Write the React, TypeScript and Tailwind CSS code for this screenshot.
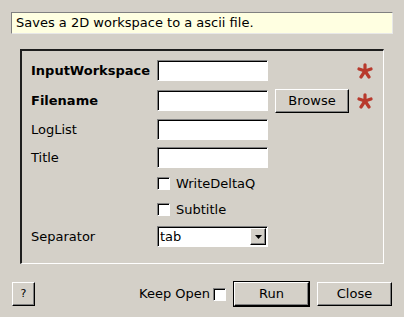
import React from "react"

// Bordure "enfoncée" façon Qt/Motif : sombre en haut/gauche, claire en bas/droite
const sunken =
  "border border-t-[#808080] border-l-[#808080] border-b-white border-r-white shadow-[inset_1px_1px_0_#000]"

// Bordure "en relief" pour les boutons
const raised =
  "border border-t-white border-l-white border-b-[#000] border-r-[#000] shadow-[inset_-1px_-1px_0_#808080]"

function Asterisk() {
  return (
    <svg width="16" height="16" viewBox="0 0 16 16" aria-hidden="true">
      <g stroke="#b8392c" strokeWidth="3.2" strokeLinecap="round">
        <line x1="8" y1="1.8" x2="8" y2="8" />
        <line x1="8" y1="8" x2="14" y2="6" />
        <line x1="8" y1="8" x2="2" y2="6" />
        <line x1="8" y1="8" x2="12" y2="14" />
        <line x1="8" y1="8" x2="4" y2="14" />
      </g>
    </svg>
  )
}

function TextBox() {
  return <div className={`w-[111px] h-[21px] bg-white ${sunken}`} />
}

function CheckBox() {
  return <div className={`w-[13px] h-[13px] bg-white shrink-0 ${sunken}`} />
}

export default function App() {
  return (
    <div className="w-[404px] h-[317px] bg-[#d4d0c8] text-black text-[13px] font-['DejaVu_Sans',sans-serif] overflow-hidden flex flex-col">

      {/* ── Description de l'algorithme ── */}
      <div className="mx-[11px] mt-[12px] h-[22px] bg-[#ffffe1] border border-t-[#808080] border-l-[#808080] border-b-[#e8e8e8] border-r-[#e8e8e8] flex items-center pl-[4px]">
        Saves a 2D workspace to a ascii file.
      </div>

      {/* ── Propriétés ── */}
      <div className="ml-[20px] mt-[15px] w-[364px] h-[215px] border-t-2 border-l-2 border-[#1e1e1e] border-r border-b border-r-white border-b-white flex flex-col pl-[9px]">

        <div className="flex items-center h-[21px] mt-[9px]">
          <span className="w-[126px] font-bold">InputWorkspace</span>
          <TextBox />
          <span className="ml-[89px]"><Asterisk /></span>
        </div>

        <div className="flex items-center h-[21px] mt-[9px]">
          <span className="w-[126px] font-bold">Filename</span>
          <TextBox />
          <button className={`ml-[7px] w-[74px] h-[24px] bg-[#d4d0c8] ${raised}`}>Browse</button>
          <span className="ml-[8px]"><Asterisk /></span>
        </div>

        <div className="flex items-center h-[21px] mt-[8px]">
          <span className="w-[126px]">LogList</span>
          <TextBox />
        </div>

        <div className="flex items-center h-[21px] mt-[7px]">
          <span className="w-[126px]">Title</span>
          <TextBox />
        </div>

        <div className="flex items-center h-[13px] mt-[9px] pl-[126px] gap-[6px]">
          <CheckBox />
          <span>WriteDeltaQ</span>
        </div>

        <div className="flex items-center h-[13px] mt-[13px] pl-[126px] gap-[6px]">
          <CheckBox />
          <span>Subtitle</span>
        </div>

        <div className="flex items-center h-[21px] mt-[10px]">
          <span className="w-[126px]">Separator</span>
          <div className={`w-[111px] h-[21px] bg-white flex items-center ${sunken}`}>
            <span className="flex-1 pl-[2px]">tab</span>
            <div className={`w-[16px] h-[17px] mr-[1px] bg-[#d4d0c8] flex items-center justify-center ${raised}`}>
              <svg width="7" height="4" viewBox="0 0 7 4" aria-hidden="true">
                <polygon points="0,0 7,0 3.5,4" fill="#000" />
              </svg>
            </div>
          </div>
        </div>
      </div>

      {/* ── Barre de boutons ── */}
      <div className="flex items-center mt-[17px] h-[26px] pl-[12px] pr-[12px]">
        <button className={`shrink-0 w-[23px] h-[24px] bg-[#d4d0c8] text-[11px] ${raised}`}>?</button>
        <span className="shrink-0 whitespace-nowrap ml-auto">Keep Open</span>
        <span className="shrink-0 ml-[3px]"><CheckBox /></span>
        <div className="shrink-0 ml-[7px] w-[77px] h-[26px] border border-black">
          <button className={`w-full h-full bg-[#d4d0c8] ${raised}`}>Run</button>
        </div>
        <button className={`shrink-0 ml-[7px] w-[75px] h-[24px] bg-[#d4d0c8] ${raised}`}>Close</button>
      </div>
    </div>
  )
}
